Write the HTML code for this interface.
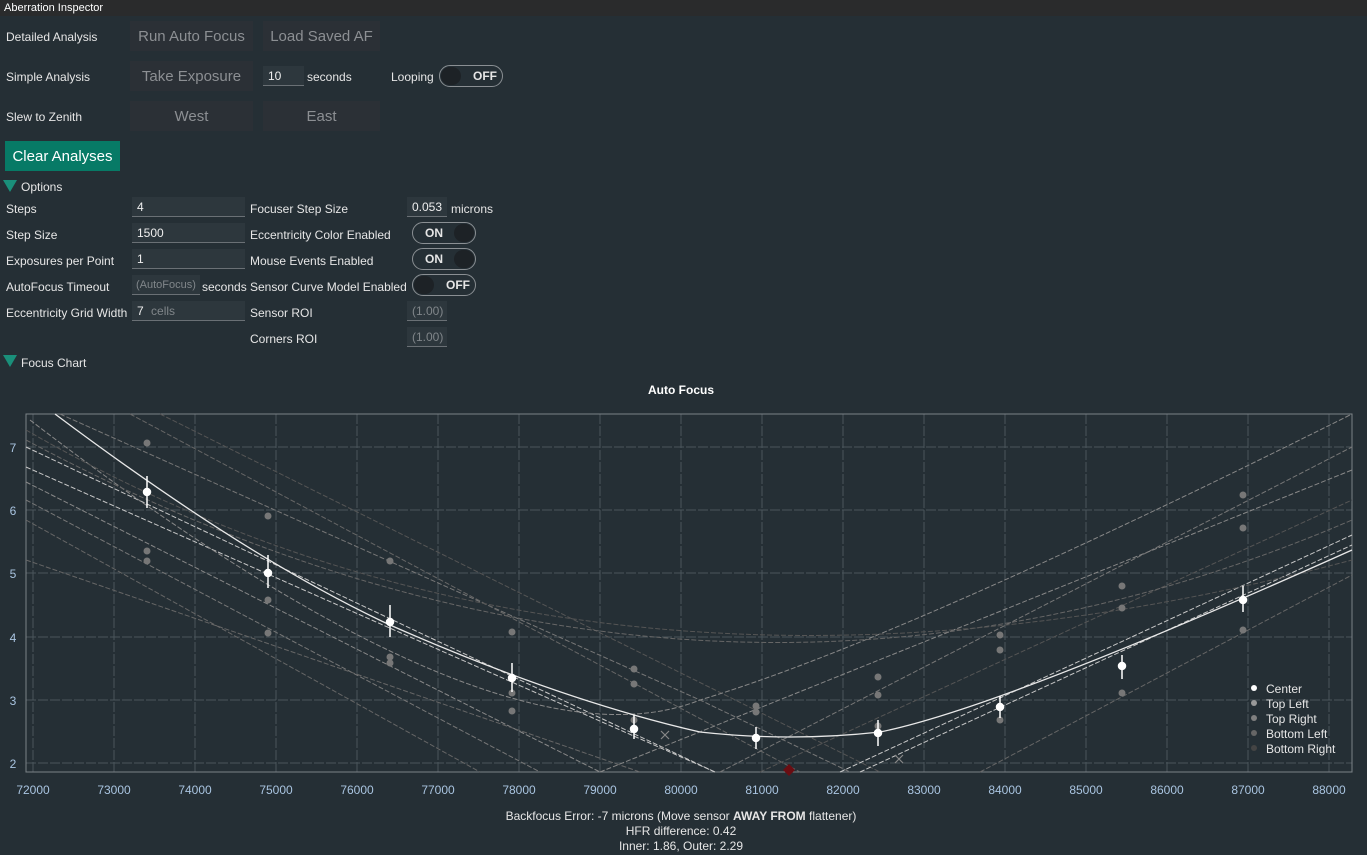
<!DOCTYPE html>
<html><head><meta charset="utf-8"><style>
body{margin:0;width:1367px;height:855px;background:#252f35;font-family:"Liberation Sans",sans-serif;color:#e6e6e6;overflow:hidden;position:relative}
.t{position:absolute;font-size:12px;white-space:nowrap}
.title{position:absolute;left:0;top:0;width:1367px;height:16px;background:#2a2b2c;font-size:11px;line-height:16px;padding-left:4px;color:#fff}
.btn{position:absolute;background:#2b3036;color:#8c8f93;font-size:15px;text-align:center;line-height:32px;height:30px}
.inp{position:absolute;background:#2d373d;border-bottom:1px solid #6a7075;height:20px;font-size:12px;line-height:20px;padding-left:5px;box-sizing:border-box;color:#eee}
.tg{position:absolute;width:64px;height:22px;border:1px solid #8a8f93;border-radius:12px;box-sizing:border-box;font-weight:bold;font-size:12px;line-height:20px}
.knob{position:absolute;top:1px;width:20px;height:18px;border-radius:10px;background:#1d2226}
.tri{position:absolute;width:0;height:0;border-left:7px solid transparent;border-right:7px solid transparent;border-top:12px solid #1a8f7a}
</style></head><body>
<div class="title">Aberration Inspector</div>
<div class="t" style="left:6px;top:30px">Detailed Analysis</div>
<div class="btn" style="left:130px;top:21px;width:123px">Run Auto Focus</div>
<div class="btn" style="left:263px;top:21px;width:117px">Load Saved AF</div>
<div class="t" style="left:6px;top:70px">Simple Analysis</div>
<div class="btn" style="left:130px;top:61px;width:123px">Take Exposure</div>
<div class="inp" style="left:263px;top:66px;width:41px">10</div>
<div class="t" style="left:307px;top:70px">seconds</div>
<div class="t" style="left:391px;top:70px">Looping</div>
<div class="tg" style="left:439px;top:65px"><div class="knob" style="left:1px"></div><span style="position:absolute;left:33px">OFF</span></div>
<div class="t" style="left:6px;top:110px">Slew to Zenith</div>
<div class="btn" style="left:130px;top:101px;width:123px">West</div>
<div class="btn" style="left:263px;top:101px;width:117px">East</div>
<div style="position:absolute;left:5px;top:141px;width:115px;height:30px;background:#077a66;color:#fff;font-size:15px;line-height:32px;text-align:center">Clear Analyses</div>
<div class="tri" style="left:3px;top:180px"></div><div class="t" style="left:21px;top:180px">Options</div>

<div class="t" style="left:6px;top:202px">Steps</div><div class="inp" style="left:132px;top:197px;width:113px">4</div>
<div class="t" style="left:6px;top:228px">Step Size</div><div class="inp" style="left:132px;top:223px;width:113px">1500</div>
<div class="t" style="left:6px;top:254px">Exposures per Point</div><div class="inp" style="left:132px;top:249px;width:113px">1</div>
<div class="t" style="left:6px;top:280px">AutoFocus Timeout</div><div class="inp" style="left:132px;top:275px;width:68px;color:#80868a;font-size:11px;padding-left:4px">(AutoFocus)</div><div class="t" style="left:202px;top:280px">seconds</div>
<div class="t" style="left:6px;top:306px">Eccentricity Grid Width</div><div class="inp" style="left:132px;top:301px;width:113px">7 <span style="color:#80868a;margin-left:4px">cells</span></div>

<div class="t" style="left:250px;top:202px">Focuser Step Size</div><div class="inp" style="left:407px;top:197px;width:40px">0.053</div><div class="t" style="left:451px;top:202px">microns</div>
<div class="t" style="left:250px;top:228px">Eccentricity Color Enabled</div>
<div class="tg" style="left:412px;top:222px"><span style="position:absolute;left:12px">ON</span><div class="knob" style="left:41px"></div></div>
<div class="t" style="left:250px;top:254px">Mouse Events Enabled</div>
<div class="tg" style="left:412px;top:248px"><span style="position:absolute;left:12px">ON</span><div class="knob" style="left:41px"></div></div>
<div class="t" style="left:250px;top:280px">Sensor Curve Model Enabled</div>
<div class="tg" style="left:412px;top:274px"><div class="knob" style="left:1px"></div><span style="position:absolute;left:33px">OFF</span></div>
<div class="t" style="left:250px;top:306px">Sensor ROI</div><div class="inp" style="left:407px;top:301px;width:40px;color:#80868a">(1.00)</div>
<div class="t" style="left:250px;top:332px">Corners ROI</div><div class="inp" style="left:407px;top:327px;width:40px;color:#80868a">(1.00)</div>
<div class="tri" style="left:3px;top:355px"></div><div class="t" style="left:21px;top:356px">Focus Chart</div>

<svg style="position:absolute;left:0;top:0" width="1367" height="855" font-family="Liberation Sans, sans-serif">
<text x="681" y="394" fill="#fff" font-size="12" font-weight="bold" text-anchor="middle">Auto Focus</text>
<g stroke="#4a555b" stroke-width="1" stroke-dasharray="10,2">
<line x1="26" x2="1352" y1="447" y2="447"/><line x1="26" x2="1352" y1="510" y2="510"/><line x1="26" x2="1352" y1="573" y2="573"/><line x1="26" x2="1352" y1="637" y2="637"/><line x1="26" x2="1352" y1="700" y2="700"/><line x1="26" x2="1352" y1="763" y2="763"/>
</g>
<g stroke="#4a555b" stroke-dasharray="10,2">
<line x1="33" x2="33" y1="414" y2="772"/><line x1="114" x2="114" y1="414" y2="772"/><line x1="195" x2="195" y1="414" y2="772"/><line x1="276" x2="276" y1="414" y2="772"/><line x1="357" x2="357" y1="414" y2="772"/><line x1="438" x2="438" y1="414" y2="772"/><line x1="519" x2="519" y1="414" y2="772"/><line x1="600" x2="600" y1="414" y2="772"/><line x1="681" x2="681" y1="414" y2="772"/><line x1="762" x2="762" y1="414" y2="772"/><line x1="843" x2="843" y1="414" y2="772"/><line x1="924" x2="924" y1="414" y2="772"/><line x1="1005" x2="1005" y1="414" y2="772"/><line x1="1086" x2="1086" y1="414" y2="772"/><line x1="1167" x2="1167" y1="414" y2="772"/><line x1="1248" x2="1248" y1="414" y2="772"/><line x1="1329" x2="1329" y1="414" y2="772"/>
</g>
<rect x="26" y="414" width="1326" height="358" fill="none" stroke="#7c8388"/>
<g fill="none" stroke-dasharray="5,2" stroke-width="1">
<path d="M26 447 L715 772" stroke="#c8c8c8"/>
<path d="M26 467 L715 772" stroke="#c8c8c8"/>
<path d="M26 482 L600 772" stroke="#888"/>
<path d="M26 500 L540 772" stroke="#777"/>
<path d="M26 520 L480 772" stroke="#666"/>
<path d="M26 560 L640 772" stroke="#666"/>
<path d="M60 414 L700 700 L850 772" stroke="#777"/>
<path d="M130 414 L800 772" stroke="#666"/>
<path d="M160 414 L880 772" stroke="#555"/>
<path d="M840 772 L1352 535" stroke="#c8c8c8"/>
<path d="M860 772 L1352 545" stroke="#c8c8c8"/>
<path d="M600 772 L1352 470" stroke="#888"/>
<path d="M720 772 L1352 447" stroke="#777"/>
<path d="M980 772 L1352 575" stroke="#666"/>
<path d="M760 772 L1352 500" stroke="#555"/>
<path d="M30 420 Q500 780 700 700 Q900 640 1352 414" stroke="#888"/>
<path d="M26 440 Q700 800 1352 520" stroke="#666"/>
<path d="M26 430 Q600 760 1352 560" stroke="#555"/>
</g>
<path d="M55 414 Q250 560 390 625 Q560 700 700 732 Q790 742 880 732 Q1000 708 1352 550" fill="none" stroke="#e8e8e8" stroke-width="1.3"/>
<g fill="#777">
<circle cx="147" cy="443" r="3.5"/><circle cx="147" cy="551" r="3.5"/><circle cx="147" cy="561" r="3.5"/>
<circle cx="268" cy="516" r="3.5"/><circle cx="268" cy="600" r="3.5"/><circle cx="268" cy="633" r="3.5"/>
<circle cx="390" cy="561" r="3.5"/><circle cx="390" cy="657" r="3.5"/><circle cx="390" cy="663" r="3.5"/>
<circle cx="512" cy="632" r="3.5"/><circle cx="512" cy="693" r="3.5"/><circle cx="512" cy="711" r="3.5"/>
<circle cx="634" cy="684" r="3.5"/><circle cx="634" cy="669" r="3.5"/><circle cx="634" cy="720" r="3.5"/>
<circle cx="756" cy="706" r="3.5"/><circle cx="756" cy="712" r="3.5"/>
<circle cx="878" cy="677" r="3.5"/><circle cx="878" cy="695" r="3.5"/><circle cx="878" cy="726" r="3.5"/>
<circle cx="1000" cy="635" r="3.5"/><circle cx="1000" cy="650" r="3.5"/><circle cx="1000" cy="720" r="3.5"/>
<circle cx="1122" cy="586" r="3.5"/><circle cx="1122" cy="608" r="3.5"/><circle cx="1122" cy="693" r="3.5"/>
<circle cx="1243" cy="495" r="3.5"/><circle cx="1243" cy="528" r="3.5"/><circle cx="1243" cy="630" r="3.5"/>
</g>
<g stroke="#fff" stroke-width="1.5" fill="#fff">
<path d="M147 476v32M268 555v33M390 605v32M512 663v29M634 715v24M756 727v22M878 720v26M1000 696v22M1122 655v24M1243 586v26"/>
<circle cx="147" cy="492" r="3.5"/><circle cx="268" cy="573" r="3.5"/><circle cx="390" cy="622" r="3.5"/><circle cx="512" cy="678" r="3.5"/><circle cx="634" cy="729" r="3.5"/><circle cx="756" cy="738" r="3.5"/><circle cx="878" cy="733" r="3.5"/><circle cx="1000" cy="707" r="3.5"/><circle cx="1122" cy="666" r="3.5"/><circle cx="1243" cy="600" r="3.5"/>
</g>
<path d="M661 731l8 8M669 731l-8 8M895 755l8 8M903 755l-8 8" stroke="#888" stroke-width="1.2"/>
<path d="M789 764l6 6-6 6-6-6z" fill="#6a0d12"/>
<g fill="#a9c4e0" font-size="12" text-anchor="middle">
<text x="33" y="794">72000</text><text x="114" y="794">73000</text><text x="195" y="794">74000</text><text x="276" y="794">75000</text><text x="357" y="794">76000</text><text x="438" y="794">77000</text><text x="519" y="794">78000</text><text x="600" y="794">79000</text><text x="681" y="794">80000</text><text x="762" y="794">81000</text><text x="843" y="794">82000</text><text x="924" y="794">83000</text><text x="1005" y="794">84000</text><text x="1086" y="794">85000</text><text x="1167" y="794">86000</text><text x="1248" y="794">87000</text><text x="1329" y="794">88000</text>
<text x="13" y="452">7</text><text x="13" y="515">6</text><text x="13" y="578">5</text><text x="13" y="642">4</text><text x="13" y="705">3</text><text x="13" y="768">2</text>
</g>
<g font-size="12" fill="#e6e6e6">
<circle cx="1254" cy="688" r="3" fill="#fff"/><text x="1266" y="693">Center</text>
<circle cx="1254" cy="703" r="3" fill="#999"/><text x="1266" y="708">Top Left</text>
<circle cx="1254" cy="718" r="3" fill="#808080"/><text x="1266" y="723">Top Right</text>
<circle cx="1254" cy="733" r="3" fill="#666"/><text x="1266" y="738">Bottom Left</text>
<circle cx="1254" cy="748" r="3" fill="#444"/><text x="1266" y="753">Bottom Right</text>
</g>
<g font-size="12" fill="#e6e6e6" text-anchor="middle">
<text x="681" y="820">Backfocus Error: -7 microns (Move sensor <tspan font-weight="bold">AWAY FROM</tspan> flattener)</text>
<text x="681" y="835">HFR difference: 0.42</text>
<text x="681" y="850">Inner: 1.86, Outer: 2.29</text>
</g>
</svg>
</body></html>
